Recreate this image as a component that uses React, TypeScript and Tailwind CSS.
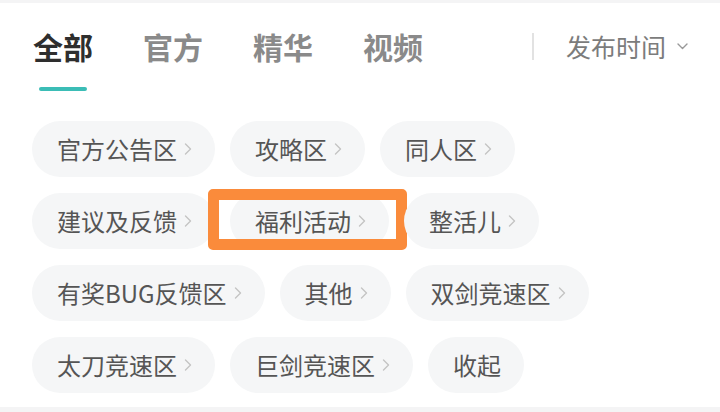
import React from "react";

const tabs = ["全部", "官方", "精华", "视频"];

const rows = [
  [{ name: "官方公告区" }, { name: "攻略区" }, { name: "同人区" }],
  [{ name: "建议及反馈" }, { name: "福利活动", marked: true }, { name: "整活儿" }],
  [{ name: "有奖BUG反馈区" }, { name: "其他" }, { name: "双剑竞速区" }],
  [{ name: "太刀竞速区" }, { name: "巨剑竞速区" }, { name: "收起", noArrow: true }],
];

function Chevron() {
  return (
    <svg width="8" height="14" viewBox="0 0 8 14" fill="none" stroke="#c4c4c4" strokeWidth="1.4" strokeLinecap="round" strokeLinejoin="round">
      <path d="M1.5 2 L6.5 7 L1.5 12" />
    </svg>
  );
}

function Chip({ name, noArrow, marked }: { name: string; noArrow?: boolean; marked?: boolean }) {
  return (
    <div className="relative">
      <div className="h-[56px] rounded-full bg-[#f5f6f7] flex items-center pl-[25px] pr-[23px] gap-[7px]">
        <span className="text-[24px] leading-none text-[#555555]">{name}</span>
        {!noArrow && <Chevron />}
      </div>
      {marked && (
        <div className="absolute -left-[22px] -right-[18px] -top-[4px] -bottom-[1px] border-[11px] border-[#fa8b3b] rounded-[5px]" />
      )}
    </div>
  );
}

export default function App() {
  return (
    <div className="w-[720px] h-[412px] bg-white flex flex-col font-['Noto_Sans_CJK_SC','Noto_Sans',sans-serif] overflow-hidden">
      <div className="h-[3px] bg-[#f4f4f5]" />

      {/* 标签栏 */}
      <div className="flex items-start pl-[33px] pr-[32px] pt-[23px]">
        <div className="flex gap-[50px]">
          {tabs.map((t, i) => (
            <div key={t} className="flex flex-col items-center">
              <span className={`text-[30px] leading-[40px] font-bold ${i === 0 ? "text-[#2e2e2e]" : "text-[#8a8a8a]"}`}>{t}</span>
              <div className={`mt-[21px] h-[4px] w-[48px] rounded-full ${i === 0 ? "bg-[#3bbdb6]" : "bg-transparent"}`} />
            </div>
          ))}
        </div>
        <div className="ml-auto flex items-center h-[40px]">
          <div className="w-[2px] h-[27px] bg-[#e2e2e2]" />
          <span className="ml-[32px] text-[25px] leading-none text-[#7c7c7c]">发布时间</span>
          <svg className="ml-[11px]" width="11" height="7" viewBox="0 0 11 7" fill="none" stroke="#999999" strokeWidth="1.4" strokeLinecap="round" strokeLinejoin="round">
            <path d="M1 1 L5.5 5.5 L10 1" />
          </svg>
        </div>
      </div>

      {/* 分区 */}
      <div className="flex flex-col gap-[16px] pl-[32px] pt-[30px]">
        {rows.map((row, r) => (
          <div key={r} className="flex gap-[15px]">
            {row.map((c) => (
              <Chip key={c.name} {...c} />
            ))}
          </div>
        ))}
      </div>

      <div className="mt-auto h-[5px] bg-[#f4f4f5]" />
    </div>
  );
}
